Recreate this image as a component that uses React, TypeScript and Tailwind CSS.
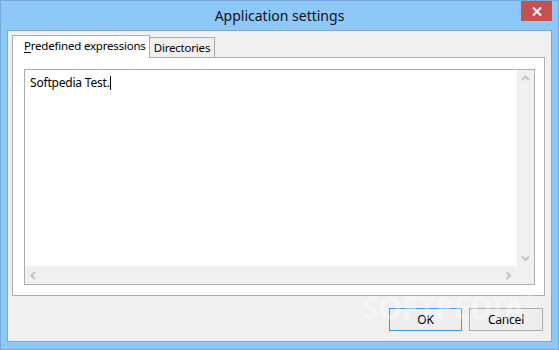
import React from "react";

const font = { fontFamily: '"Noto Sans", "Open Sans", sans-serif' };

function Arrow({ dir }: { dir: "up" | "down" | "left" | "right" }) {
  const paths: Record<string, string> = {
    up: "M1 6 L4.5 2.5 L8 6",
    down: "M1 2.5 L4.5 6 L8 2.5",
    left: "M6 1 L2.5 4.5 L6 8",
    right: "M2.5 1 L6 4.5 L2.5 8",
  };
  return (
    <svg width="9" height="9" viewBox="0 0 9 9" className="block">
      <path d={paths[dir]} fill="none" stroke="#c4c4c4" strokeWidth="2" />
    </svg>
  );
}

function TextArea() {
  return (
    <div className="flex-1 border border-[#abadb3] bg-white grid grid-cols-[1fr_17px] grid-rows-[1fr_18px]">
      <div className="pl-[5px] pt-[5px] text-[12px] tracking-[-0.2px] text-black leading-[16px]">
        Softpedia Test.<span className="inline-block w-px h-[14px] bg-black align-[-3px]" />
      </div>
      <div className="bg-[#f0f0f0] flex flex-col items-center justify-between pt-[4px] pb-[3px]">
        <Arrow dir="up" />
        <Arrow dir="down" />
      </div>
      <div className="bg-[#f0f0f0] flex items-center justify-between pl-[4px] pr-[4px]">
        <Arrow dir="left" />
        <Arrow dir="right" />
      </div>
      <div className="bg-[#f0f0f0]" />
    </div>
  );
}

export default function App() {
  return (
    <div
      className="w-[559px] h-[350px] bg-[#8cc8f8] border border-[#78a9d8] flex flex-col px-[6px] pb-[7px] overflow-hidden"
      style={font}
    >
      <div className="h-[29px] grid grid-cols-[31px_1fr_31px] items-start shrink-0">
        <div />
        <div className="text-center text-[14px] leading-[29px] text-[#111]">Application settings</div>
        <div className="h-[20px] bg-[#c75050] flex items-center justify-center">
          <svg width="10" height="9" viewBox="0 0 10 9">
            <path d="M1 0.5 L9 8.5 M9 0.5 L1 8.5" stroke="#fff" strokeWidth="2" />
          </svg>
        </div>
      </div>

      <div className="flex-1 border border-[#78a9d8] bg-[#f0f0f0] flex flex-col pl-[4px] pr-[6px] pt-[4px] pb-[10px] relative text-[11.5px] tracking-[-0.2px] text-black">
        <div className="flex items-end h-[22px] shrink-0">
          <div className="h-[23px] -mb-px relative z-10 bg-white border border-b-0 border-[#acacac] pl-[11px] pr-[3px] leading-[20px]">
            <span className="underline underline-offset-2">P</span>redefined expressions
          </div>
          <div className="h-[20px] bg-[#f0f0f0] border border-l-0 border-b-0 border-[#acacac] px-[4px] leading-[19px]">
            Directories
          </div>
        </div>
        <div className="h-[239px] border border-[#acacac] bg-white flex pl-[11px] pr-[9px] pt-[11px] pb-[10px] shrink-0">
          <TextArea />
        </div>
        <div className="flex-1 flex items-end justify-end gap-[7px] pr-[2px]">
          <div className="w-[73px] h-[23px] border border-[#3c9ae8] bg-[#eeeeee] flex items-center justify-center text-[12px]">OK</div>
          <div className="w-[74px] h-[23px] border border-[#acacac] bg-[#eeeeee] flex items-center justify-center text-[12px]">Cancel</div>
        </div>
        <div className="absolute left-[354px] top-[262px] pointer-events-none text-[30px] font-bold text-white/40 leading-none select-none">
          SOFTPEDIA<span className="text-[10px] align-top ml-[2px]">®</span>
        </div>
      </div>
    </div>
  );
}
